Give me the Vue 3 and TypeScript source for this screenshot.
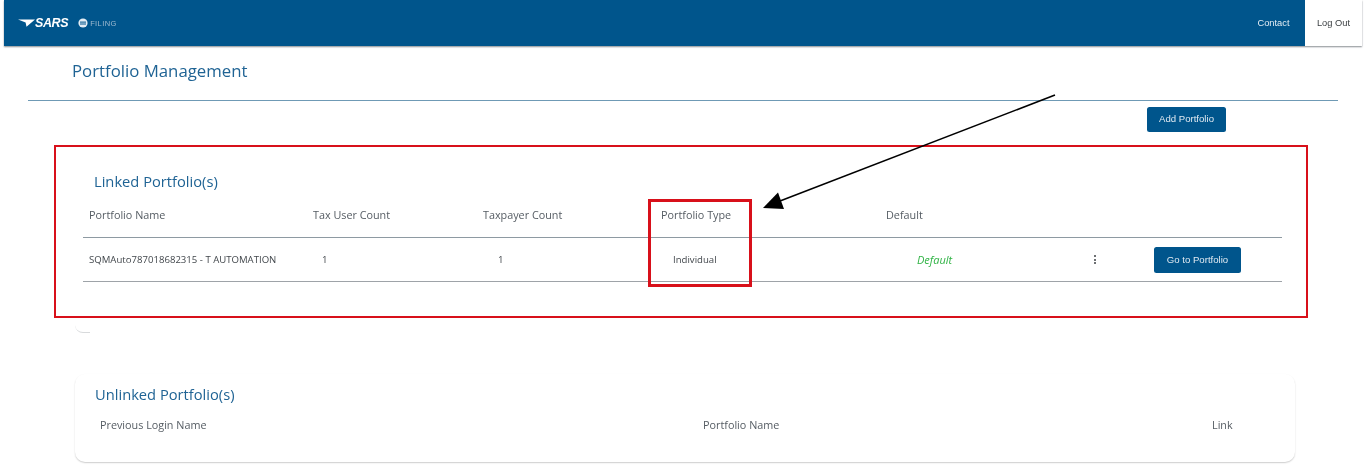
<script setup lang="ts">
interface Column { label: string; offset: number }
const columns: Column[] = [
  { label: 'Portfolio Name', offset: 6 },
  { label: 'Tax User Count', offset: 230 },
  { label: 'Taxpayer Count', offset: 400 },
  { label: 'Portfolio Type', offset: 578 },
  { label: 'Default', offset: 803 }
]
</script>

<template>
  <div class="page">
    <header class="topbar">
      <div class="brand">
        <svg class="sars-mark" viewBox="0 0 17 8" width="17" height="8" aria-hidden="true">
          <path d="M0 0.5 L17 0.5 L8.5 7.8 L7.6 3.6 Z" fill="#fff" />
        </svg>
        <span class="sars">SARS</span>
        <svg class="efiling-mark" viewBox="0 0 10 10" width="10" height="10" aria-hidden="true">
          <circle cx="5" cy="5" r="4.6" fill="#e4edf4" />
          <rect x="2" y="3.6" width="6" height="1" fill="#00558c" />
          <rect x="2" y="5.5" width="6" height="1" fill="#00558c" />
        </svg>
        <span class="filing">FILING</span>
      </div>
      <nav class="nav">
        <a class="contact">Contact</a>
        <a class="logout">Log Out</a>
      </nav>
    </header>

    <h1 class="title">Portfolio Management</h1>
    <hr class="rule" />

    <div class="actions">
      <button class="btn add">Add Portfolio</button>
    </div>

    <section class="linked">
      <h2 class="heading linked-heading">Linked Portfolio(s)</h2>
      <div class="table">
        <div class="head-row">
          <span v-for="c in columns" :key="c.label" class="col" :style="{ left: c.offset + 'px' }">{{ c.label }}</span>
        </div>
        <div class="data-row">
          <span class="cell name">SQMAuto787018682315 - T AUTOMATION</span>
          <span class="cell n1">1</span>
          <span class="cell n2">1</span>
          <span class="cell type">Individual</span>
          <span class="cell def">Default</span>
          <span class="dots"><i></i><i></i><i></i></span>
          <button class="btn go">Go to Portfolio</button>
        </div>
      </div>
    </section>

    <div class="stub"></div>

    <section class="unlinked">
      <h2 class="heading">Unlinked Portfolio(s)</h2>
      <div class="unlinked-head">
        <span class="u1">Previous Login Name</span>
        <span class="u2">Portfolio Name</span>
        <span class="u3">Link</span>
      </div>
    </section>

    <div class="type-box"></div>
    <svg class="arrow" viewBox="0 0 1367 467" width="1367" height="467" aria-hidden="true">
      <line x1="1055" y1="95" x2="780" y2="201" stroke="#000" stroke-width="1.6" />
      <path d="M763 208 L778 192.5 L784 209 Z" fill="#000" />
    </svg>
  </div>
</template>

<style scoped>
.page {
  position: relative;
  width: 1367px;
  height: 467px;
  overflow: hidden;
  background: #fff;
  font-family: "Open Sans", "Liberation Sans", sans-serif;
  color: #555c63;
  filter: blur(0.35px);
}
.topbar {
  display: flex;
  justify-content: space-between;
  height: 46px;
  margin: 0 5px 0 4px;
  background: #00558c;
  box-shadow: 0 1px 1.5px #8a8f94;
}
.brand {
  display: flex;
  align-items: center;
  padding-left: 14px;
  color: #fff;
}
.sars {
  font-family: "Liberation Sans", sans-serif;
  font-size: 12.5px;
  font-style: italic;
  font-weight: 700;
  letter-spacing: -0.4px;
}
.efiling-mark { margin-left: 10px; }
.filing {
  margin-left: 2px;
  font-family: "Liberation Sans", sans-serif;
  font-size: 7.5px;
  letter-spacing: 0.4px;
  color: #9fbbd0;
}
.nav {
  display: flex;
  font-family: "Liberation Sans", sans-serif;
  font-size: 9.3px;
}
.nav a { display: flex; align-items: center; justify-content: center; }
.contact { width: 61px; padding-right: 1px; color: #e3edf4; }
.logout { width: 57px; background: #fff; color: #3c4043; }
.title {
  margin: 14px 0 0 72px;
  height: 21px;
  font-size: 16.8px;
  line-height: 21px;
  font-weight: 500;
  color: #1f6394;
}
.rule {
  width: 1310px;
  margin: 19px 0 0 28px;
  height: 1px;
  border: 0;
  background: #6f9ab5;
}
.actions {
  display: flex;
  justify-content: flex-end;
  padding: 6px 141px 0 0;
  height: 25px;
}
.btn {
  border: 0;
  border-radius: 2.5px;
  background: #00558c;
  color: #dfe9f1;
  font-family: "Liberation Sans", sans-serif;
  font-size: 9.6px;
  padding: 0;
}
.add { width: 79px; height: 25px; padding-bottom: 2px; }
.linked {
  box-sizing: border-box;
  width: 1254px;
  height: 173px;
  margin: 13px 0 0 54px;
  padding: 25px 24px 0 27px;
  border: 2px solid #d8101a;
}
.heading {
  margin: 0;
  font-size: 14.7px;
  line-height: 18px;
  font-weight: 400;
  color: #1f6394;
}
.linked-heading { padding-left: 11px; }
.table { margin-top: 15px; }
.head-row {
  position: relative;
  height: 32px;
  border-bottom: 1px solid #8e9aa2;
  font-size: 10.8px;
  line-height: 19px;
}
.col { position: absolute; top: 0; white-space: nowrap; }
.data-row {
  display: grid;
  grid-template-columns: 233px 176px 176px 240px 161px 85px 87px;
  align-items: center;
  height: 43px;
  border-bottom: 1px solid #9ea3a8;
  font-size: 9.6px;
  color: #42474c;
}
.cell { white-space: nowrap; }
.name { padding-left: 6px; }
.n1 { padding-left: 6px; }
.n2 { padding-left: 6px; }
.type { padding-left: 5px; }
.def {
  padding-left: 9px;
  font-size: 11px;
  font-style: italic;
  color: #2fb344;
}
.dots { display: flex; flex-direction: column; align-items: flex-start; gap: 1.5px; padding-left: 25px; }
.dots i { width: 2px; height: 2px; border-radius: 50%; background: #3d4145; }
.go { width: 87px; height: 26px; }
.stub {
  width: 15px;
  height: 8px;
  margin: 6px 0 0 75px;
  border-bottom: 1px solid #d8dadc;
  border-radius: 0 0 0 8px;
}
.unlinked {
  box-sizing: border-box;
  width: 1220px;
  height: 88px;
  margin: 41px 0 0 75px;
  padding: 11px 0 0 20px;
  border-radius: 10px;
  box-shadow: 0 1px 1.5px rgba(0, 0, 0, 0.2);
}
.unlinked-head {
  display: grid;
  grid-template-columns: 603px 509px auto;
  margin-top: 14px;
  padding-left: 5px;
  font-size: 10.8px;
  line-height: 15px;
}
.type-box {
  position: absolute;
  left: 648px;
  top: 199px;
  width: 104px;
  height: 88px;
  box-sizing: border-box;
  border: 3px solid #d8101a;
}
.arrow { position: absolute; left: 0; top: 0; pointer-events: none; }
</style>
